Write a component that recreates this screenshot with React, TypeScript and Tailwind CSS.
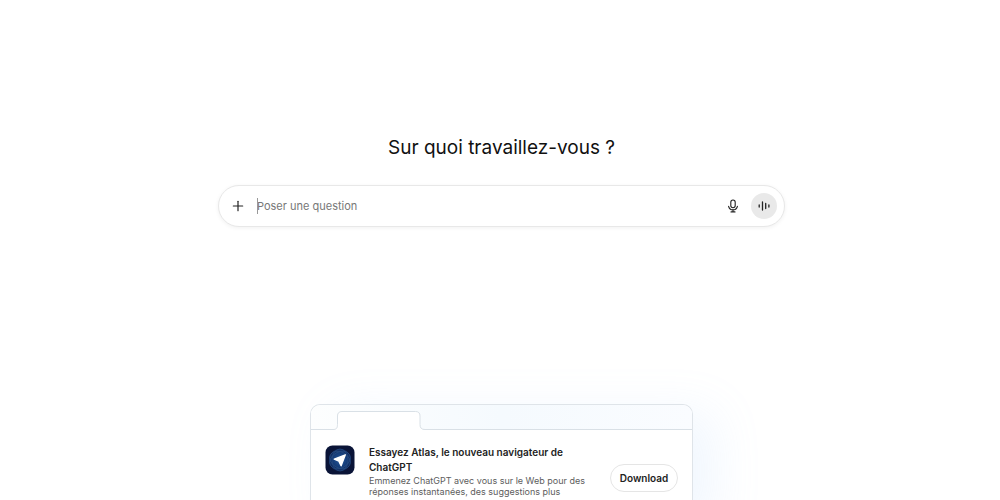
import { Plus } from "lucide-react";

function MicIcon() {
  return (
    <svg width="14" height="14" viewBox="0 0 14 14" fill="none" stroke="currentColor" strokeWidth="1.1" strokeLinecap="round" aria-hidden="true">
      <rect x="4.8" y="1" width="4.4" height="7.8" rx="2.2" />
      <path d="M2.600 7.300c.5 2.100 2.200 3.500 4.400 3.500s3.900-1.400 4.400-3.500" />
      <path d="M7 10.800v2M5 12.900h4" />
    </svg>
  );
}

function VoiceIcon() {
  return (
    <svg width="14" height="14" viewBox="0 0 14 14" fill="none" stroke="currentColor" strokeWidth="1.3" strokeLinecap="round" aria-hidden="true">
      <path d="M2.200 6v2M5.500 3v8M8.700 4.500v5M11.900 6v2" />
    </svg>
  );
}

function AtlasLogo() {
  return (
    <svg className="size-[30px] shrink-0" viewBox="0 0 30 30" aria-hidden="true">
      <defs>
        <radialGradient id="atlas-globe">
          <stop offset="0%" stopColor="#235699" />
          <stop offset="65%" stopColor="#153c78" />
          <stop offset="100%" stopColor="#10295a" />
        </radialGradient>
      </defs>
      <rect x="0.5" y="0.5" width="29" height="29" rx="7" fill="#0a1437" />
      <circle cx="15" cy="15" r="11" fill="url(#atlas-globe)" />
      <g fill="none" stroke="#24497f" strokeWidth="0.8">
        <ellipse cx="15" cy="15" rx="11" ry="8" transform="rotate(-30 15 15)" />
        <ellipse cx="15" cy="15" rx="11" ry="8" transform="rotate(30 15 15)" />
        <ellipse cx="15" cy="15" rx="11" ry="8" transform="rotate(90 15 15)" />
      </g>
      <path d="M20.300 9.800 9.300 14.200l4.600 1.900 2.200 4.700z" fill="#fff" stroke="#fff" strokeWidth="1.400" strokeLinejoin="round" />
    </svg>
  );
}

function Composer() {
  return (
    <form
      onSubmit={(e) => e.preventDefault()}
      className="mt-[23px] flex h-[42px] w-full max-w-[567px] shrink-0 items-center rounded-full border border-[#e8e8e8] bg-white pr-[7px] pl-[11px] shadow-[0_1px_4px_rgba(0,0,0,0.06)]"
    >
      <button type="button" aria-label="Ajouter" className="flex size-4 items-center justify-center text-[#222]">
        <Plus className="size-4" strokeWidth={1.8} />
      </button>
      <div className="relative ml-[11px] flex flex-1 items-center">
        <span className="absolute left-0 h-4 w-px bg-[#999]" />
        <input
          type="text"
          aria-label="Poser une question"
          placeholder="Poser une question"
          className="h-6 w-full bg-transparent text-[11px] leading-4 text-[#111] outline-none placeholder:text-[#777]"
        />
      </div>
      <button type="button" aria-label="Dicter" className="mr-[11px] flex size-[14px] items-center justify-center text-[#222]">
        <MicIcon />
      </button>
      <button type="button" aria-label="Mode vocal" className="flex size-[26px] items-center justify-center rounded-full bg-[#e9e9e9] text-[#222]">
        <VoiceIcon />
      </button>
    </form>
  );
}

function AtlasCard() {
  return (
    <aside className="mt-[177px] w-full max-w-[383px] shrink-0 rounded-t-[10px] border border-b-0 border-[#dfe4e9] bg-white shadow-[22px_8px_48px_0_rgba(150,190,250,0.13)]">
      <div className="flex h-[25px] items-end rounded-t-[9px] border-b border-[#d9e0e6] bg-linear-to-r from-[#fdfefe] via-[#f5fafe] to-[#fafcff] pl-[22px]">
        {/* folder tab, one pixel lower than the bar so it covers the rule */}
        <svg className="-mb-px h-[19px] w-[92px]" viewBox="0 0 92 19" aria-hidden="true">
          <path d="M0 19v-.5c3.500 0 4.500-1.500 4.500-5V5c0-3 1.500-4.500 4.500-4.500h73.500c3 0 4.500 1.500 4.500 4.500v8.500c0 3.500 1.500 5 5 5v.5z" fill="#fff" />
          <path d="M0 18.500c3.500 0 4.500-1.500 4.500-5V5c0-3 1.500-4.500 4.500-4.500h73.500c3 0 4.500 1.500 4.500 4.500v8.500c0 3.500 1.500 5 5 5" fill="none" stroke="#d9e0e6" />
        </svg>
      </div>
      <div className="flex items-start px-[14px] pt-[15px] pb-6">
        <AtlasLogo />
        <div className="ml-[14px] w-[220px]">
          <h2 className="text-[10px] leading-[15px] font-semibold text-[#222]">
            Essayez Atlas, le nouveau navigateur de ChatGPT
          </h2>
          <p className="text-[9px] leading-[11px] text-[#5d5d5d]">
            Emmenez ChatGPT avec vous sur le Web pour des réponses instantanées, des suggestions plus
          </p>
        </div>
        <button type="button" className="mt-[19px] ml-auto h-7 w-[68px] rounded-full border border-[#e5e5e5] bg-white text-[10px] leading-4 font-semibold text-[#222]">
          Download
        </button>
      </div>
    </aside>
  );
}

export default function App() {
  return (
    <main className="flex h-screen flex-col items-center overflow-hidden bg-white pt-[134px] pl-[3px] font-['Inter',sans-serif]">
      <h1 className="text-[19px] leading-7 text-[#111]">Sur quoi travaillez-vous ?</h1>
      <Composer />
      <AtlasCard />
    </main>
  );
}
